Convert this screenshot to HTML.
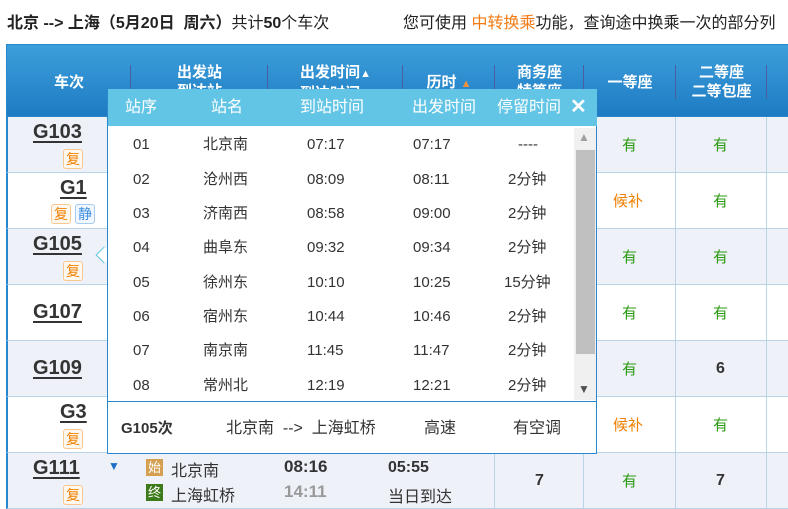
<!DOCTYPE html>
<html><head><meta charset="utf-8"><style>
*{margin:0;padding:0;box-sizing:border-box}
body{width:788px;height:503px;overflow:hidden;background:#fff;font-family:"Liberation Sans","Noto Sans CJK SC",sans-serif;font-size:15px;color:#333;position:relative}
.a{position:absolute;white-space:nowrap}
.c{text-align:center}
.hd{position:absolute;left:6px;top:44px;width:790px;height:73px;background:linear-gradient(#3d9fdb,#1e7bc3);border:1px solid #2a87cc}
.ht{color:#fff;font-weight:bold;font-size:15px;line-height:19px}
.vs{position:absolute;top:20px;width:1px;height:34px;background:#4a5fa0}
.row{position:absolute;left:6px;width:790px;height:56px;border-left:2px solid #2a87cc;border-bottom:1px solid #b8d4e6}
.o{background:#eef1f8}
.vl{position:absolute;top:0;width:1px;height:56px;background:#b8d4e6}
.tn{font-weight:bold;font-size:20px;color:#333;text-decoration:underline;text-decoration-thickness:2px;text-underline-offset:3px}
.tag{position:absolute;width:20px;height:20px;border:1px solid #f8c890;border-radius:3px;color:#f08000;font-size:14px;line-height:18px;text-align:center;background:#fff8ee}
.g{color:#2a9a10}.or{color:#f08000}
.pop{position:absolute;left:107px;top:89px;width:490px;height:365px;background:#fff;border:1px solid #2a87cc;border-top:none}
.ph{position:absolute;left:0;top:0;width:489px;height:37px;background:#63c5e6;color:#fff;font-size:16px;line-height:37px}
.pr{font-size:15px;color:#333;line-height:20px}
.row .g,.row .or{top:17px !important}
</style></head><body>
<div class="a" style="left:7px;top:9px;font-size:16px;color:#222"><b>北京 --&gt; 上海（5月20日&nbsp; 周六）</b>共计<b>50</b>个车次</div>
<div class="a" style="left:403px;top:9px;font-size:16px;color:#222">您可使用 <span style="color:#f37b14">中转换乘</span>功能，查询途中换乘一次的部分列</div>

<div class="hd">
 <div class="a ht c" style="left:0;width:124px;top:28px">车次</div>
 <div class="vs" style="left:123px"></div>
 <div class="a ht c" style="left:124px;width:137px;top:18px">出发站<br>到达站</div>
 <div class="vs" style="left:260px"></div>
 <div class="a ht c" style="left:261px;width:135px;top:18px">出发时间<span style="font-size:11px">▲</span><br>到达时间<span style="font-size:11px">▼</span></div>
 <div class="vs" style="left:395px"></div>
 <div class="a ht c" style="left:396px;width:92px;top:28px">历时 <span style="color:#f5903a;font-size:11px">▲</span></div>
 <div class="vs" style="left:487px"></div>
 <div class="a ht c" style="left:488px;width:89px;top:18px">商务座<br>特等座</div>
 <div class="vs" style="left:576px"></div>
 <div class="a ht c" style="left:577px;width:92px;top:28px">一等座</div>
 <div class="vs" style="left:668px"></div>
 <div class="a ht c" style="left:669px;width:91px;top:18px">二等座<br>二等包座</div>
 <div class="vs" style="left:759px"></div>
</div>

<div class="row o" style="top:117px"><div class="vl" style="left:486px"></div><div class="vl" style="left:575px"></div><div class="vl" style="left:667px"></div><div class="vl" style="left:758px"></div>
 <div class="a tn" style="left:25px;top:4px">G103</div><div class="tag" style="left:55px;top:32px">复</div>
 <div class="a g" style="left:614px;top:19px">有</div><div class="a g" style="left:705px;top:19px">有</div></div>
<div class="row" style="top:173px"><div class="vl" style="left:486px"></div><div class="vl" style="left:575px"></div><div class="vl" style="left:667px"></div><div class="vl" style="left:758px"></div>
 <div class="a tn" style="left:52px;top:4px">G1</div><div class="tag" style="left:43px;top:31px">复</div><div class="tag" style="left:67px;top:31px;color:#3b8ee0;border-color:#a8ccf0;background:#f0f7ff">静</div>
 <div class="a or" style="left:605px;top:19px">候补</div><div class="a g" style="left:705px;top:19px">有</div></div>
<div class="row o" style="top:229px"><div class="vl" style="left:486px"></div><div class="vl" style="left:575px"></div><div class="vl" style="left:667px"></div><div class="vl" style="left:758px"></div>
 <div class="a tn" style="left:25px;top:4px">G105</div><div class="tag" style="left:55px;top:32px">复</div>
 <div class="a g" style="left:614px;top:19px">有</div><div class="a g" style="left:705px;top:19px">有</div></div>
<div class="row" style="top:285px"><div class="vl" style="left:486px"></div><div class="vl" style="left:575px"></div><div class="vl" style="left:667px"></div><div class="vl" style="left:758px"></div>
 <div class="a tn" style="left:25px;top:16px">G107</div>
 <div class="a g" style="left:614px;top:19px">有</div><div class="a g" style="left:705px;top:19px">有</div></div>
<div class="row o" style="top:341px"><div class="vl" style="left:486px"></div><div class="vl" style="left:575px"></div><div class="vl" style="left:667px"></div><div class="vl" style="left:758px"></div>
 <div class="a tn" style="left:25px;top:16px">G109</div>
 <div class="a g" style="left:614px;top:19px">有</div><div class="a" style="left:708px;top:19px;font-weight:bold;font-size:16px">6</div></div>
<div class="row" style="top:397px"><div class="vl" style="left:486px"></div><div class="vl" style="left:575px"></div><div class="vl" style="left:667px"></div><div class="vl" style="left:758px"></div>
 <div class="a tn" style="left:52px;top:4px">G3</div><div class="tag" style="left:55px;top:32px">复</div>
 <div class="a or" style="left:605px;top:19px">候补</div><div class="a g" style="left:705px;top:19px">有</div></div>
<div class="row o" style="top:453px"><div class="vl" style="left:486px"></div><div class="vl" style="left:575px"></div><div class="vl" style="left:667px"></div><div class="vl" style="left:758px"></div>
 <div class="a tn" style="left:25px;top:4px">G111</div><div class="tag" style="left:55px;top:32px">复</div>
 <div class="a" style="left:100px;top:6px;color:#1e6fc8;font-size:12px">▼</div>
 <div class="a" style="left:138px;top:6px;width:17px;height:17px;background:#d4a050;color:#fff;font-size:13px;line-height:17px;text-align:center">始</div>
 <div class="a" style="left:163px;top:4px;font-size:16px">北京南</div>
 <div class="a" style="left:138px;top:31px;width:17px;height:17px;background:#3d7a1a;color:#fff;font-size:13px;line-height:17px;text-align:center">终</div>
 <div class="a" style="left:163px;top:29px;font-size:16px">上海虹桥</div>
 <div class="a" style="left:276px;top:4px;font-weight:bold;font-size:17px">08:16</div>
 <div class="a" style="left:276px;top:29px;font-weight:bold;font-size:17px;color:#999">14:11</div>
 <div class="a" style="left:380px;top:6px;font-weight:bold;font-size:16px">05:55</div>
 <div class="a" style="left:380px;top:30px;font-size:16px">当日到达</div>
 <div class="a" style="left:527px;top:19px;font-weight:bold;font-size:16px">7</div>
 <div class="a g" style="left:614px;top:19px">有</div>
 <div class="a" style="left:708px;top:19px;font-weight:bold;font-size:16px">7</div></div>

<div class="a" style="left:98px;top:249px;width:12px;height:12px;background:#fff;border-left:1px solid #63c5e6;border-bottom:1px solid #63c5e6;transform:rotate(45deg)"></div>
<div class="pop">
 <div class="ph">
  <span class="a" style="left:17px">站序</span><span class="a" style="left:103px">站名</span><span class="a" style="left:192px">到站时间</span><span class="a" style="left:304px">出发时间</span><span class="a" style="left:389px">停留时间</span><span class="a" style="left:462px;font-weight:bold;font-size:20px">✕</span>
 </div>
 <div class="a" style="left:466px;top:39px;width:22px;height:272px;background:#f0f0f0">
  <div class="a" style="left:4px;top:2px;color:#a0a0a0;font-size:12px">▲</div>
  <div class="a" style="left:2px;top:22px;width:19px;height:204px;background:#c0c0c0"></div>
  <div class="a" style="left:4px;top:254px;color:#505050;font-size:12px">▼</div>
 </div>
 <div class="pr">
  <div class="a" style="left:25px;top:46px">01</div><div class="a" style="left:95px;top:46px">北京南</div><div class="a" style="left:199px;top:46px">07:17</div><div class="a" style="left:305px;top:46px">07:17</div><div class="a" style="left:410px;top:46px">----</div>
  <div class="a" style="left:25px;top:81px">02</div><div class="a" style="left:95px;top:81px">沧州西</div><div class="a" style="left:199px;top:81px">08:09</div><div class="a" style="left:305px;top:81px">08:11</div><div class="a" style="left:400px;top:81px">2分钟</div>
  <div class="a" style="left:25px;top:115px">03</div><div class="a" style="left:95px;top:115px">济南西</div><div class="a" style="left:199px;top:115px">08:58</div><div class="a" style="left:305px;top:115px">09:00</div><div class="a" style="left:400px;top:115px">2分钟</div>
  <div class="a" style="left:25px;top:149px">04</div><div class="a" style="left:95px;top:149px">曲阜东</div><div class="a" style="left:199px;top:149px">09:32</div><div class="a" style="left:305px;top:149px">09:34</div><div class="a" style="left:400px;top:149px">2分钟</div>
  <div class="a" style="left:25px;top:184px">05</div><div class="a" style="left:95px;top:184px">徐州东</div><div class="a" style="left:199px;top:184px">10:10</div><div class="a" style="left:305px;top:184px">10:25</div><div class="a" style="left:396px;top:184px">15分钟</div>
  <div class="a" style="left:25px;top:218px">06</div><div class="a" style="left:95px;top:218px">宿州东</div><div class="a" style="left:199px;top:218px">10:44</div><div class="a" style="left:305px;top:218px">10:46</div><div class="a" style="left:400px;top:218px">2分钟</div>
  <div class="a" style="left:25px;top:252px">07</div><div class="a" style="left:95px;top:252px">南京南</div><div class="a" style="left:199px;top:252px">11:45</div><div class="a" style="left:305px;top:252px">11:47</div><div class="a" style="left:400px;top:252px">2分钟</div>
  <div class="a" style="left:25px;top:287px">08</div><div class="a" style="left:95px;top:287px">常州北</div><div class="a" style="left:199px;top:287px">12:19</div><div class="a" style="left:305px;top:287px">12:21</div><div class="a" style="left:400px;top:287px">2分钟</div>
 </div>
 <div class="a" style="left:0;top:312px;width:489px;height:1px;background:#2a87cc"></div>
 <div class="a pr" style="left:13px;top:330px;font-weight:bold">G105次</div>
 <div class="a pr" style="left:118px;top:330px;font-size:16px">北京南 &nbsp;--&gt; &nbsp;上海虹桥</div>
 <div class="a pr" style="left:316px;top:330px;font-size:16px">高速</div>
 <div class="a pr" style="left:405px;top:330px;font-size:16px">有空调</div>
</div>
</body></html>
